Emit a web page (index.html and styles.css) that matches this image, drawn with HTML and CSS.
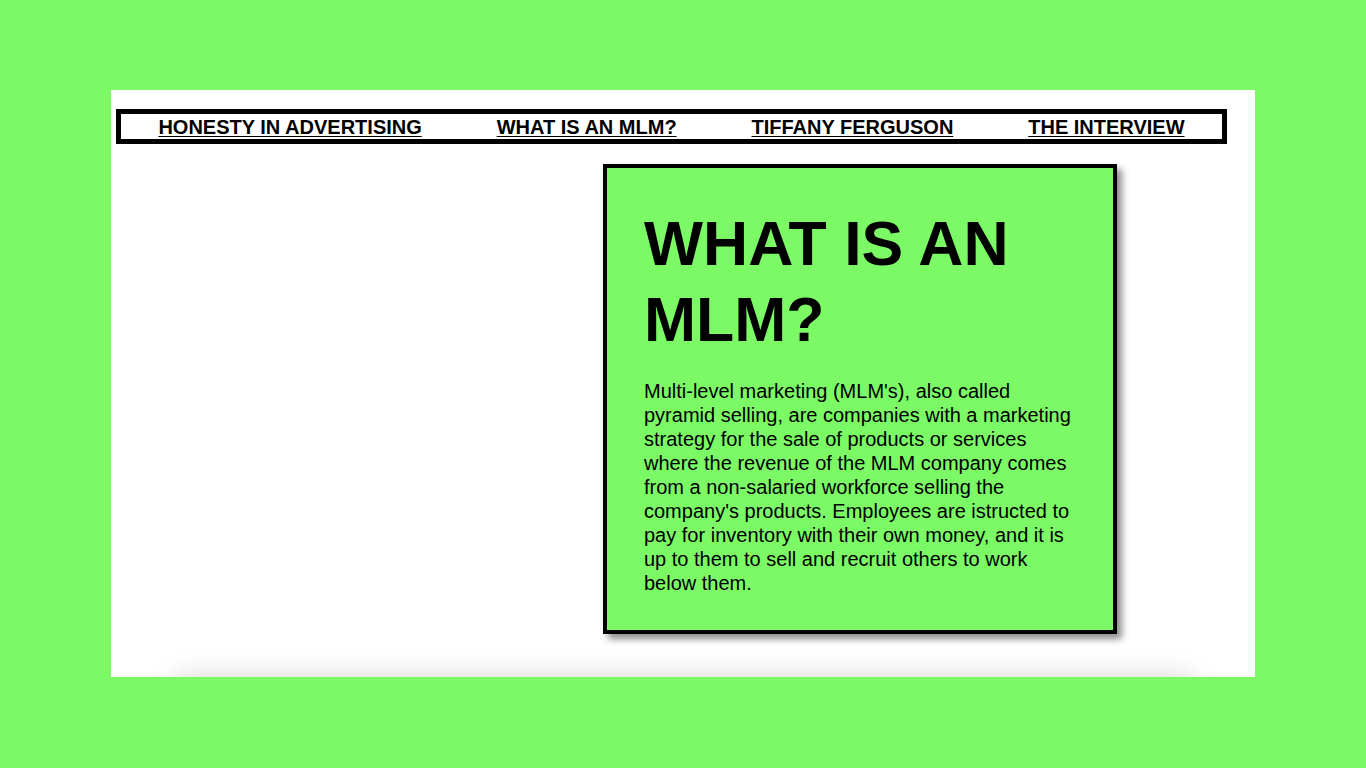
FILE: index.html
```html
<!DOCTYPE html>
<html>
<head>
<meta charset="utf-8">
<title>What is an MLM?</title>
<link rel="stylesheet" href="styles.css">
</head>
<body>
<div class="panel">
  <nav class="nav">
    <a href="#">HONESTY IN ADVERTISING</a>
    <a href="#">WHAT IS AN MLM?</a>
    <a href="#">TIFFANY FERGUSON</a>
    <a href="#">THE INTERVIEW</a>
  </nav>
  <main class="content">
    <div class="side"></div>
    <section class="card">
      <h1>WHAT IS AN MLM?</h1>
      <p>Multi-level marketing (MLM's), also called pyramid selling, are companies with a marketing strategy for the sale of products or services where the revenue of the MLM company comes from a non-salaried workforce selling the company's products. Employees are istructed to pay for inventory with their own money, and it is up to them to sell and recruit others to work below them.</p>
    </section>
  </main>
  <div class="floor"></div>
</div>
</body>
</html>
```
FILE: styles.css
```css
html, body {
  margin: 0;
  padding: 0;
}
body {
  background: #7bfa66;
  padding: 90px 111px;
  font-family: "Liberation Sans", Arial, Helvetica, sans-serif;
  color: #000;
}
.panel {
  background: #fff;
  height: 587px;
  box-sizing: border-box;
  padding: 19px 28px 0 5px;
  overflow: hidden;
  display: flex;
  flex-direction: column;
}
.nav {
  border: 5px solid #000;
  box-sizing: content-box;
  padding-top: 1px;
  height: 24px;
  display: flex;
  justify-content: space-around;
  align-items: center;
}
.nav a {
  color: #000;
  font-weight: bold;
  font-size: 20px;
  text-decoration: underline;
  text-decoration-thickness: 1px;
  text-underline-offset: 2px;
}
.content {
  flex: 1;
  display: flex;
  padding-top: 20px;
}
.side {
  width: 487px;
}
.card {
  box-sizing: border-box;
  width: 514px;
  height: 470px;
  border: 4px solid #000;
  background: #7bfa66;
  padding: 37px 29px 0 37px;
  box-shadow: 5px 5px 7px rgba(0, 0, 0, 0.45);
}
.card h1 {
  margin: 0 0 22px;
  font-size: 62.5px;
  line-height: 76px;
  font-weight: bold;
}
.card p {
  margin: 0;
  font-size: 20px;
  line-height: 24px;
}
.floor {
  height: 40px;
  margin: 0 35px -40px 60px;
  box-shadow: 0 0 28px rgba(0, 0, 0, 0.17);
  flex: none;
}
```
